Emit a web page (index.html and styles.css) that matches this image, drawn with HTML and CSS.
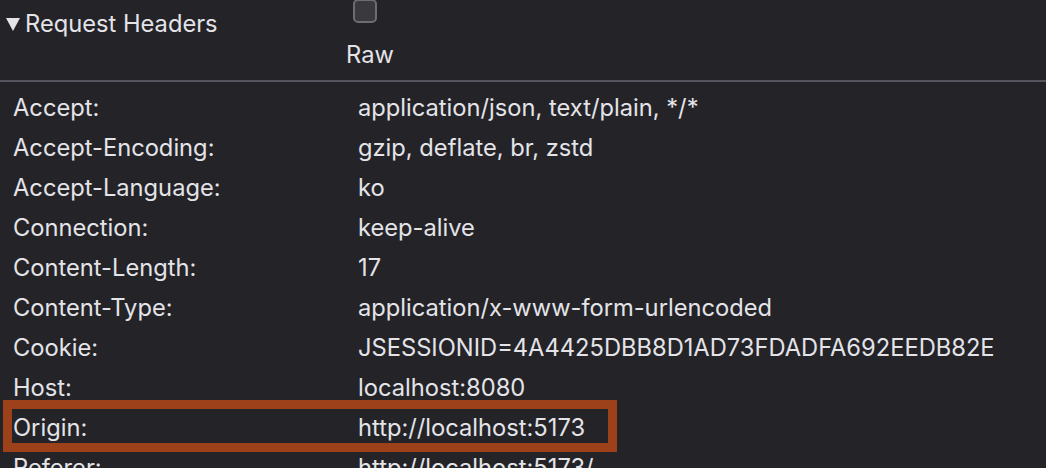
FILE: index.html
```html
<!DOCTYPE html>
<html>
<head>
<meta charset="utf-8">
<link rel="stylesheet" href="styles.css">
</head>
<body>
<div class="panel">
  <div class="header">
    <div class="title">
      <span class="caret"></span>
      <span class="title-text">Request Headers</span>
    </div>
    <div class="raw">
      <span class="checkbox"></span>
      <span class="raw-label">Raw</span>
    </div>
  </div>
  <div class="rows">
    <div class="row"><span class="name">Accept:</span><span class="value">application/json, text/plain, */*</span></div>
    <div class="row"><span class="name">Accept-Encoding:</span><span class="value">gzip, deflate, br, zstd</span></div>
    <div class="row"><span class="name">Accept-Language:</span><span class="value">ko</span></div>
    <div class="row"><span class="name">Connection:</span><span class="value">keep-alive</span></div>
    <div class="row"><span class="name">Content-Length:</span><span class="value">17</span></div>
    <div class="row"><span class="name">Content-Type:</span><span class="value">application/x-www-form-urlencoded</span></div>
    <div class="row"><span class="name">Cookie:</span><span class="value">JSESSIONID=4A4425DBB8D1AD73FDADFA692EEDB82E</span></div>
    <div class="row"><span class="name">Host:</span><span class="value">localhost:8080</span></div>
    <div class="row highlighted"><span class="name">Origin:</span><span class="value">http://localhost:5173</span></div>
    <div class="row"><span class="name">Referer:</span><span class="value">http://localhost:5173/</span></div>
  </div>
</div>
</body>
</html>
```
FILE: styles.css
```css
html, body {
  margin: 0;
  padding: 0;
  background: #232328;
  height: 100%;
  overflow: hidden;
}
.panel {
  font-family: Inter, "Noto Sans", sans-serif;
  font-size: 23.7px;
  color: #e4e4e8;
}
.header {
  display: flex;
  height: 80px;
  border-bottom: 2px solid #55555f;
}
.title {
  width: 346px;
  display: flex;
  align-items: flex-start;
  padding-top: 9px;
  box-sizing: border-box;
}
.caret {
  width: 0;
  height: 0;
  margin: 9px 5px 0 6px;
  border-left: 7px solid transparent;
  border-right: 7px solid transparent;
  border-top: 13px solid #e4e4e8;
}
.title-text {
  line-height: 30px;
}
.raw {
  display: flex;
  flex-direction: column;
  align-items: flex-start;
}
.checkbox {
  width: 20px;
  height: 20px;
  margin: 0 0 0 7px;
  position: relative;
  top: -1px;
  border: 2px solid #6c6c72;
  border-radius: 5px;
  background: #3a3a3e;
}
.raw-label {
  margin-top: 16px;
  line-height: 30px;
}
.rows {
  padding-top: 5px;
}
.row {
  display: grid;
  grid-template-columns: 345px 1fr;
  padding-left: 13px;
  height: 40px;
  align-items: center;
  position: relative;
  white-space: nowrap;
}
.highlighted::after {
  content: "";
  position: absolute;
  left: 3px;
  top: -7px;
  width: 596px;
  height: 34px;
  border: 9px solid #9c4119;
}
```
